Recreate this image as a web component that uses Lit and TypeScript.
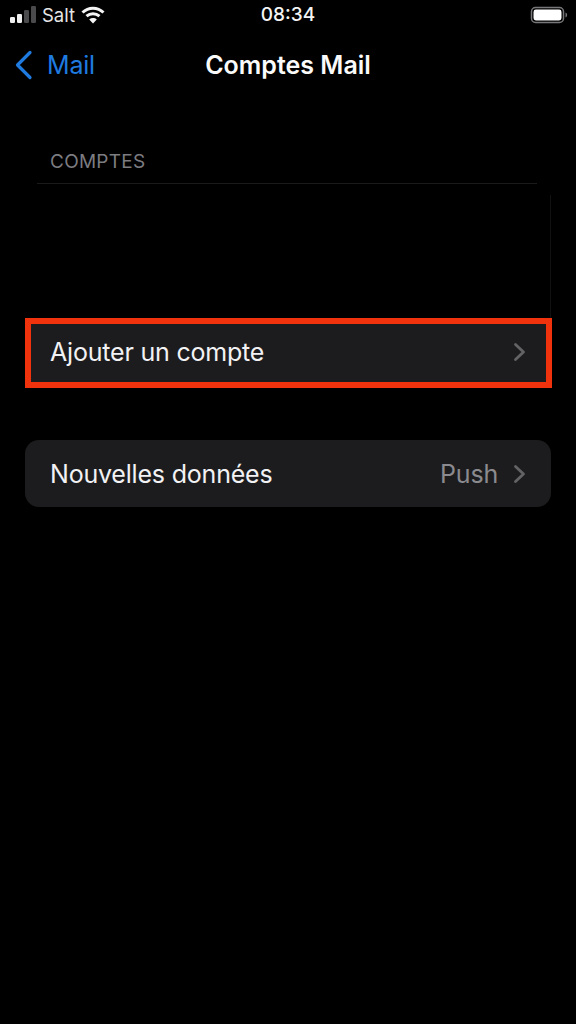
import { LitElement, html, css } from "lit";
import { customElement } from "lit/decorators.js";

const chevron = html`<svg class="chev" width="14" height="20" viewBox="0 0 14 20"><path d="M2.5 2.5 L10.5 10 L2.5 17.5" fill="none" stroke="#636366" stroke-width="2.8" stroke-linecap="round" stroke-linejoin="round"/></svg>`;

@customElement("app-root")
export class AppRoot extends LitElement {
  static styles = css`
    :host { display: block; width: 576px; height: 1024px; background: #000; color: #f2f2f4; font-family: Inter, "Noto Sans", sans-serif; overflow: hidden; }
    .status { height: 32px; display: flex; align-items: center; padding: 0 8px 2px 10px; position: relative; box-sizing: border-box; }
    .left { display: flex; align-items: center; gap: 6px; }
    .carrier { font-size: 18.5px; color: #e6e6e6; line-height: 20px; }
    .time { position: absolute; left: 0; right: 0; text-align: center; font-size: 19px; font-weight: 500; color: #f4f4f4; line-height: 20px; top: 5px; }
    .batt { margin-left: auto; display: block; }
    .nav { height: 66px; position: relative; display: flex; align-items: center; padding-left: 14px; }
    .back { display: flex; align-items: center; gap: 14px; color: #1f7be0; font-size: 25px; letter-spacing: -0.2px; margin-top: -1px; }
    .title { position: absolute; left: 0; right: 0; text-align: center; font-size: 25px; font-weight: 600; color: #fafafa; top: 18px; line-height: 30px; }
    .section { padding: 53px 25px 0 25px; display: flex; flex-direction: column; }
    .label { font-size: 19px; letter-spacing: 0.25px; color: #7c7c81; padding-left: 25px; line-height: 22px; }
    .rule { height: 1px; background: #1a1a1b; margin: 10px 14px 0 12px; }
    .ghost { height: 123px; margin-top: 11px; border-right: 1px solid #111112; }
    .row { display: flex; align-items: center; background: #1c1c1e; color: #f2f2f4; font-size: 25px; letter-spacing: -0.2px; box-sizing: border-box; }
    .row .text { flex: 1; }
    .value { color: #8a8a8f; margin-right: 15px; }
    .chev { display: block; flex: none; }
    .outlined { height: 70px; width: 527px; border: 6px solid #f1330d; padding: 0 19px 0 19px; }
    .outlined .text { margin-top: -2px; }
    .outlined .chev { margin-top: -2px; }
    .card { height: 67px; width: 526px; margin-top: 52px; border-radius: 14px; padding: 0 24px 0 25px; }
  `;

  render() {
    return html`
      <div class="status">
        <div class="left">
          <svg width="26" height="18" viewBox="0 0 26 18">
            <rect x="0" y="11" width="5" height="6" rx="1.2" fill="#f0f0f0"/>
            <rect x="7" y="8" width="5" height="9" rx="1.2" fill="#f0f0f0"/>
            <rect x="14" y="4" width="5" height="13" rx="1.2" fill="#4a4a4c"/>
            <rect x="21" y="0" width="5" height="17" rx="1.2" fill="#4a4a4c"/>
          </svg>
          <span class="carrier">Salt</span>
          <svg width="24" height="18" viewBox="0 0 24 18">
            <path d="M1.5 6.5 C7.5 0.8 16.5 0.8 22.5 6.5" fill="none" stroke="#f4f4f4" stroke-width="3"/>
            <path d="M5.5 10.2 C9.3 6.8 14.7 6.8 18.5 10.2" fill="none" stroke="#f4f4f4" stroke-width="3"/>
            <path d="M12 17.5 L8.2 13.4 C10.4 11.6 13.6 11.6 15.8 13.4 Z" fill="#f4f4f4"/>
          </svg>
        </div>
        <div class="time">08:34</div>
        <svg class="batt" width="38" height="18" viewBox="0 0 38 18">
          <rect x="1.5" y="1.5" width="32" height="15" rx="4" fill="none" stroke="#77777a" stroke-width="1.5"/>
          <rect x="3.5" y="3.5" width="28" height="11" rx="2.4" fill="#fff"/>
          <path d="M35.5 6.5 C36.7 7 37.1 8 37.1 9 C37.1 10 36.7 11 35.5 11.5 Z" fill="#77777a"/>
        </svg>
      </div>
      <div class="nav">
        <div class="back">
          <svg width="19" height="30" viewBox="0 0 19 30"><path d="M16 2.5 L3.5 15 L16 27.5" fill="none" stroke="#1f7be0" stroke-width="3.2" stroke-linecap="round" stroke-linejoin="round"/></svg>
          <span>Mail</span>
        </div>
        <div class="title">Comptes Mail</div>
      </div>
      <div class="section">
        <div class="label">COMPTES</div>
        <div class="rule"></div>
        <div class="ghost"></div>
        <div class="row outlined"><span class="text">Ajouter un compte</span>${chevron}</div>
        <div class="row card"><span class="text">Nouvelles données</span><span class="value">Push</span>${chevron}</div>
      </div>
    `;
  }
}
